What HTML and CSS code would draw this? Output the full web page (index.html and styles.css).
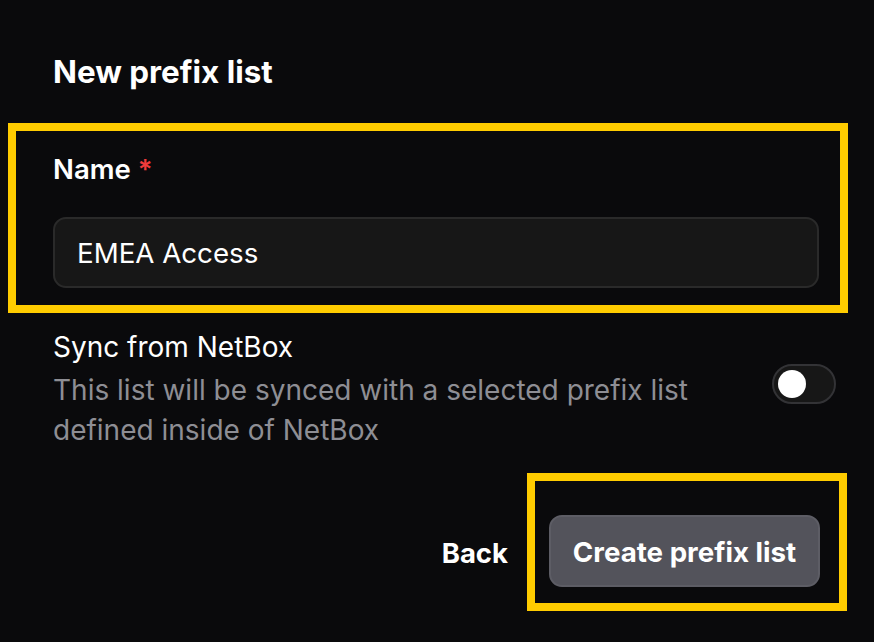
FILE: index.html
```html
<!DOCTYPE html>
<html lang="en">
<head>
<meta charset="utf-8">
<title>New prefix list</title>
<link rel="stylesheet" href="styles.css">
</head>
<body>
<main class="page">
  <h1 class="title">New prefix list</h1>
  <section class="highlight field-box">
    <label class="label" for="name">Name <span class="req">*</span></label>
    <input class="input" id="name" type="text" value="EMEA Access">
  </section>
  <section class="sync-row">
    <div class="sync-text">
      <div class="sync-title">Sync from NetBox</div>
      <div class="sync-desc">This list will be synced with a selected prefix list defined inside of NetBox</div>
    </div>
    <div class="toggle"><span class="knob"></span></div>
  </section>
  <section class="actions">
    <button class="btn-back" type="button">Back</button>
    <div class="highlight btn-box">
      <button class="btn-primary" type="button">Create prefix list</button>
    </div>
  </section>
</main>
</body>
</html>
```

FILE: styles.css
```css
* { box-sizing: border-box; }
html, body {
  margin: 0;
  background: #0a0a0c;
  color: #ffffff;
  font-family: Inter, "Noto Sans", sans-serif;
}
.page {
  width: 874px;
  height: 642px;
  padding: 54px 26px 0 8px;
}
.title {
  margin: 0 0 33px 45px;
  font-size: 31.4px;
  line-height: 36px;
  font-weight: 700;
}
.highlight {
  border: 8px solid #ffcc00;
}
.field-box {
  width: 840px;
  padding: 21px 21px 17px 37px;
  display: flex;
  flex-direction: column;
  gap: 31px;
}
.label {
  font-size: 27.5px;
  line-height: 34px;
  font-weight: 600;
}
.req { color: #ef3b3b; }
.input {
  display: block;
  width: 766px;
  height: 71px;
  padding: 0 22px;
  background: #171717;
  border: 2px solid #2a2a2a;
  border-radius: 13px;
  color: #ffffff;
  font-family: inherit;
  font-size: 27.7px;
  outline: none;
}
.sync-row {
  display: flex;
  align-items: flex-start;
  margin: 14px 12px 0 45px;
}
.sync-text { flex: 1; padding-right: 40px; }
.sync-title {
  font-size: 28px;
  line-height: 40px;
  margin-bottom: 3px;
}
.sync-desc {
  font-size: 28px;
  line-height: 40px;
  color: #8e8e94;
}
.toggle {
  margin-top: 37px;
  width: 64px;
  height: 40px;
  border-radius: 20px;
  background: #171717;
  border: 2px solid #333336;
  padding: 4px;
  display: flex;
  align-items: center;
}
.knob {
  width: 28px;
  height: 28px;
  border-radius: 50%;
  background: #ffffff;
}
.actions {
  margin-top: 23px;
  display: flex;
  justify-content: flex-end;
  align-items: flex-start;
  gap: 19px;
  padding-right: 1px;
}
.btn-back {
  background: none;
  border: 0;
  padding: 0;
  margin-top: 44px;
  line-height: 72px;
  color: #ffffff;
  font-family: inherit;
  font-size: 27.5px;
  font-weight: 700;
}
.btn-box {
  width: 320px;
  height: 138px;
  padding: 34px 19px 16px 14px;
}
.btn-primary {
  width: 271px;
  height: 72px;
  padding: 2px 0 0;
  border-radius: 13px;
  background: #53535b;
  border: 2px solid #5d5d65;
  color: #ffffff;
  font-family: inherit;
  font-size: 27.7px;
  font-weight: 700;
}
```
